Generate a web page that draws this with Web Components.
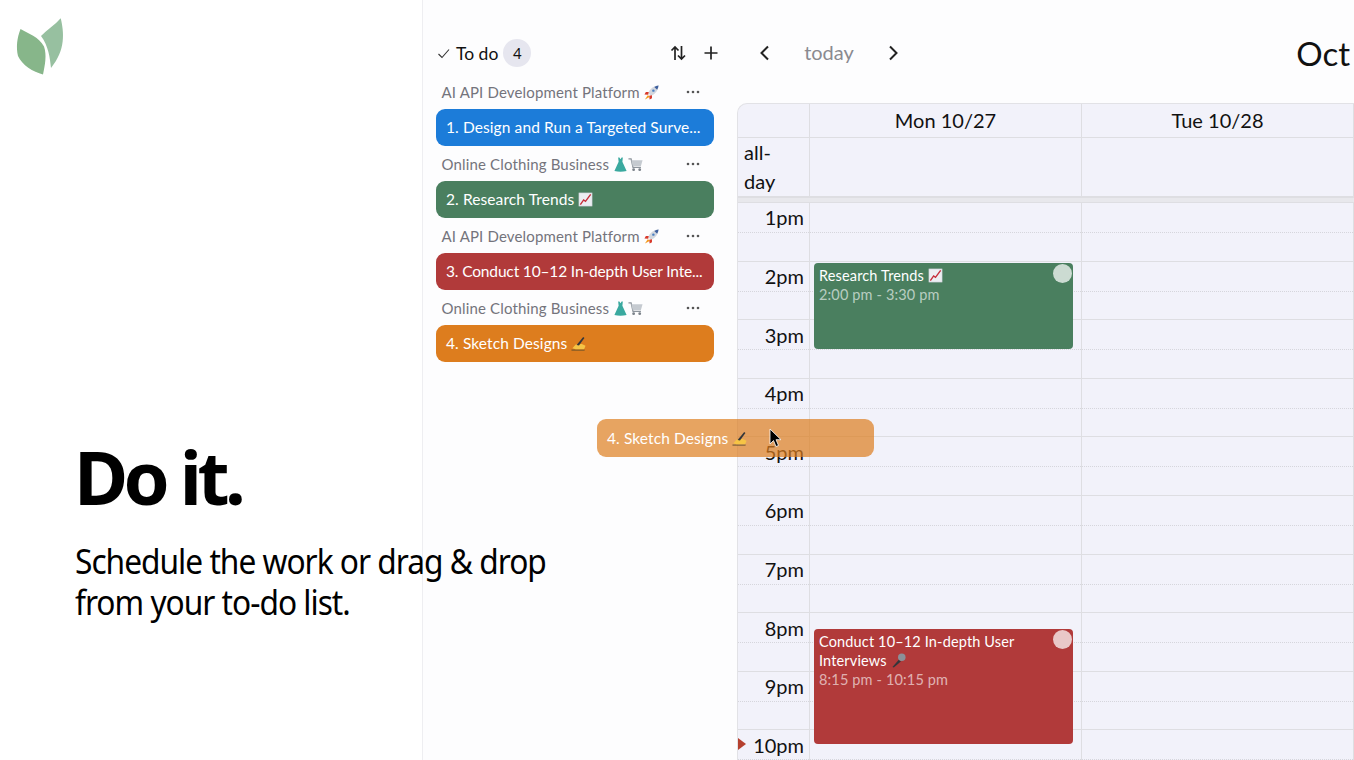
<!DOCTYPE html>
<html>
<head>
<meta charset="utf-8">
<title>Do it.</title>
<style>
    html, body { margin: 0; height: 100%; overflow: hidden; background: #fff; }
</style>
</head>
<body>
<app-page>
    <hero-pane slot="hero" heading="Do it.">Schedule the work or drag &amp; drop<br>from your to-do list.</hero-pane>
    <todo-panel slot="todo" count="4">
        <todo-group project="AI API Development Platform" emoji="rocket">
            <todo-item color="#1c7cd9">1. Design and Run a Targeted Surve...</todo-item>
        </todo-group>
        <todo-group project="Online Clothing Business" emoji="dress,cart">
            <todo-item color="#4a7f5f">2. Research Trends <mini-emoji name="chart"></mini-emoji></todo-item>
        </todo-group>
        <todo-group project="AI API Development Platform" emoji="rocket">
            <todo-item color="#b13a3a" style="letter-spacing:-.15px">3. Conduct 10–12 In-depth User Inte...</todo-item>
        </todo-group>
        <todo-group project="Online Clothing Business" emoji="dress,cart">
            <todo-item color="#dd7d1e">4. Sketch Designs <mini-emoji name="hand"></mini-emoji></todo-item>
        </todo-group>
    </todo-panel>
    <cal-view slot="calendar"></cal-view>
    <drag-ghost slot="ghost">4. Sketch Designs <mini-emoji name="hand"></mini-emoji></drag-ghost>
</app-page>

<script>
const UI_FONT = '"Lato", "Noto Sans", sans-serif';

const EMOJI = {
    rocket: `<path d="M15.500 .5C10 1 6.500 4 4.500 8.500l3 3C12 9.500 15 6 15.500 .5z" fill="#d3d7de"/><path d="M15.500 .5c-1.700.2-3.200.7-4.500 1.500l3 3c.8-1.300 1.300-2.800 1.500-4.500z" fill="#3d5f9e"/><circle cx="10" cy="6" r="1.300" fill="#4a7fc1"/><path d="M5 7.500H2L.5 10l4 .5zM8.500 11v3l-2.500 1.500-.5-4z" fill="#d8392b"/><path d="M4 11 1 15.500l4.500-2.500.5-1z" fill="#f39a1f"/>`,
    dress: `<path d="M5.500 .5h1.300L8 2.500 9.200 .5h1.300L10 5l4.500 10c-4 1-9 1-13 0L6 5z" fill="#3aa99f"/>`,
    cart: `<path d="M.5 2h2.800l2 9h8.500" fill="none" stroke="#8d949c" stroke-width="1.300"/><path d="M3.600 3.500h11.900l-1.700 6H5z" fill="#c5cad0"/><circle cx="6" cy="13.500" r="1.500" fill="#7b828a"/><circle cx="12.500" cy="13.500" r="1.500" fill="#7b828a"/>`,
    chart: `<rect x="1" y="1" width="14" height="14" fill="#eceef2" stroke="#c9ccd3" stroke-width=".6"/><path d="M2.500 13.500l3.500-5 2 1.500 5.500-7.500" fill="none" stroke="#c62f3b" stroke-width="1.500"/>`,
    hand: `<path d="M.5 15h14" stroke="#5a4a2a" stroke-width="1"/><path d="M1.500 13 5 9l6.500-.5 4 2-1.500 3.500H5z" fill="#f6c445"/><path d="M6 9.500 13 1l1.300 1L8.500 10z" fill="#33363b"/>`,
    mic: `<path d="M1.500 15 8.500 7 10.500 9 3 15.500z" fill="#33363b"/><circle cx="11.500" cy="4.500" r="4" fill="#8b9098"/>`
};

class MiniEmoji extends HTMLElement {
    constructor() {
        super();
        this.shadowObj = this.attachShadow({ mode: 'open' });
        this.shadowObj.innerHTML = `
        <style>
            :host { display: inline-block; width: 15px; height: 15px; vertical-align: -2px; }
            svg { display: block; width: 100%; height: 100%; }
        </style>
        <svg viewBox="0 0 16 16">${EMOJI[this.getAttribute('name')] || ''}</svg>`;
    }
}
customElements.define('mini-emoji', MiniEmoji);

class AppPage extends HTMLElement {
    constructor() {
        super();
        this.shadowObj = this.attachShadow({ mode: 'open' });
        this.shadowObj.innerHTML = `
        <style>
            :host { display: flex; position: relative; width: 1354px; height: 760px; overflow: hidden; background: #fff; }
            .panel {
                flex: 1; display: flex; min-width: 0;
                background: #fdfdfe; border-left: 1px solid #eeeef1;
            }
            .left { flex: 0 0 422px; width: 422px; min-width: 0; position: relative; z-index: 2; }
            .ghost { position: absolute; left: 597px; top: 419px; z-index: 3; }
        </style>
        <div class="left"><slot name="hero"></slot></div>
        <div class="panel">
            <slot name="todo"></slot>
            <slot name="calendar"></slot>
        </div>
        <div class="ghost"><slot name="ghost"></slot></div>`;
    }
}
customElements.define('app-page', AppPage);

class HeroPane extends HTMLElement {
    constructor() {
        super();
        this.shadowObj = this.attachShadow({ mode: 'open' });
        this.shadowObj.innerHTML = `
        <style>
            :host {
                display: flex; flex-direction: column; justify-content: space-between;
                width: 422px; height: 760px; box-sizing: border-box; padding: 18px 0 138px 0;
                font-family: "Noto Sans", sans-serif; color: #000; white-space: nowrap;
            }
            svg { display: block; width: 70px; height: 60px; }
            h1 { margin: 0 0 26px 74px; font-size: 74px; line-height: 74px; font-weight: 700; letter-spacing: -4.600px; }
            p { margin: 0 0 0 75px; font-size: 35px; line-height: 41px; letter-spacing: -1.100px; transform: scaleX(.905); transform-origin: left center; }
        </style>
        <svg viewBox="0 18 70 60">
            <path d="M20.500 29C29 34 39 37 44 46.500 47 55 45 65 43 74.500 33 72 22 65 18 56 16 47 17 38 20.500 29z" fill="#87b68a"/>
            <path d="M60.700 18.300C64 32 66 50 51 68 50 58 48.500 46 41 36 47 30 55 25 60.700 18.300z" fill="#97c0a0"/>
        </svg>
        <div>
            <h1>${this.getAttribute('heading')}</h1>
            <p><slot></slot></p>
        </div>`;
    }
}
customElements.define('hero-pane', HeroPane);

class TodoPanel extends HTMLElement {
    constructor() {
        super();
        this.shadowObj = this.attachShadow({ mode: 'open' });
        this.shadowObj.innerHTML = `
        <style>
            :host { display: block; width: 314px; flex: none; box-sizing: border-box; padding: 39px 23px 0 13px; font-family: ${UI_FONT}; }
            header { display: flex; align-items: center; height: 28px; margin-bottom: 12px; color: #111; font-size: 17.500px; }
            .check { width: 13px; height: 13px; margin: 0 6px 0 1px; }
            .count {
                width: 28px; height: 28px; margin-left: 5px; border-radius: 50%; background: #e6e6ef;
                display: flex; align-items: center; justify-content: center; font-size: 15px;
            }
            .tools { margin-left: auto; display: flex; gap: 15px; margin-right: -6px; }
            .tools svg { display: block; width: 18px; height: 18px; }
            ::slotted(todo-group) { margin-bottom: 5px; }
        </style>
        <header>
            <svg class="check" viewBox="0 0 13 13"><path d="M1.500 7l3.500 3.500 7-8" fill="none" stroke="#333" stroke-width="1.100"/></svg>
            <span>To do</span>
            <span class="count">${this.getAttribute('count')}</span>
            <div class="tools">
                <svg viewBox="0 0 18 18" fill="none" stroke="#222" stroke-width="1.700"><path d="M6 16V3M2.500 6.500 6 3l3.500 3.500M12.500 2v13M9 11.500l3.500 3.500 3.500-3.500"/></svg>
                <svg viewBox="0 0 18 18" fill="none" stroke="#222" stroke-width="1.700"><path d="M9 2.500v13M2.500 9h13"/></svg>
            </div>
        </header>
        <slot></slot>`;
    }
}
customElements.define('todo-panel', TodoPanel);

class TodoGroup extends HTMLElement {
    constructor() {
        super();
        this.shadowObj = this.attachShadow({ mode: 'open' });
        const icons = this.getAttribute('emoji').split(',').map(n => `<mini-emoji name="${n}"></mini-emoji>`).join('');
        this.shadowObj.innerHTML = `
        <style>
            :host { display: block; }
            .row { display: flex; align-items: center; height: 26px; padding: 0 14px 0 5.500px; color: #74747c; font-size: 15px; letter-spacing: .15px; margin-bottom: 4px; white-space: nowrap; }
            .emoji { margin-left: 4px; display: inline-flex; }
            svg { margin-left: auto; width: 14px; height: 4px; display: block; }
        </style>
        <div class="row">
            <span>${this.getAttribute('project')}</span><span class="emoji">${icons}</span>
            <svg viewBox="0 0 14 4" fill="#555"><circle cx="2" cy="2" r="1.300"/><circle cx="7" cy="2" r="1.300"/><circle cx="12" cy="2" r="1.300"/></svg>
        </div>
        <slot></slot>`;
    }
}
customElements.define('todo-group', TodoGroup);

class TodoItem extends HTMLElement {
    constructor() {
        super();
        this.shadowObj = this.attachShadow({ mode: 'open' });
        this.shadowObj.innerHTML = `
        <style>
            :host {
                display: block; height: 37px; line-height: 37px; box-sizing: border-box;
                padding: 0 10px 0 10px; border-radius: 9px; color: #fff; font-size: 15.500px; letter-spacing: .1px;
                background: ${this.getAttribute('color')};
                white-space: nowrap;
            }
        </style>
        <slot></slot>`;
    }
}
customElements.define('todo-item', TodoItem);

class DragGhost extends HTMLElement {
    constructor() {
        super();
        this.shadowObj = this.attachShadow({ mode: 'open' });
        this.shadowObj.innerHTML = `
        <style>
            :host {
                display: block; position: relative; width: 277px; height: 38px; line-height: 38px; box-sizing: border-box;
                padding: 0 10px; border-radius: 9px; color: #fff; font-size: 15.500px; letter-spacing: .1px; font-family: ${UI_FONT};
                background: rgba(221, 125, 30, .7); white-space: nowrap;
            }
            svg { position: absolute; left: 172px; top: 9px; width: 14px; height: 20px; }
        </style>
        <slot></slot>
        <svg viewBox="0 0 14 20"><path d="M1 1v15l3.500-3.500 2.500 6 2.500-1-2.500-5.800H12z" fill="#000" stroke="#fff" stroke-width=".8"/></svg>`;
    }
}
customElements.define('drag-ghost', DragGhost);

class CalEvent extends HTMLElement {
    constructor() {
        super();
        this.shadowObj = this.attachShadow({ mode: 'open' });
        this.shadowObj.innerHTML = `
        <style>
            :host {
                position: absolute; left: 3.500px; width: 259.500px; box-sizing: border-box; display: block;
                top: ${this.getAttribute('top')}px; height: ${this.getAttribute('height')}px;
                padding: 3px 32px 0 5.500px; border-radius: 4px; font-size: 14.500px; letter-spacing: .15px; line-height: 19px; color: #fff;
                background: ${this.getAttribute('color')};
            }
            .time { color: rgba(255,255,255,.62); }
            i { position: absolute; top: 1.500px; right: 1px; width: 19px; height: 19px; border-radius: 50%; background: rgba(255,255,255,.72); }
        </style>
        <div><slot></slot></div>
        <div class="time">${this.getAttribute('time')}</div>
        <i></i>`;
    }
}
customElements.define('cal-event', CalEvent);

class CalView extends HTMLElement {
    constructor() {
        super();
        this.shadowObj = this.attachShadow({ mode: 'open' });
        const hours = ['1pm', '2pm', '3pm', '4pm', '5pm', '6pm', '7pm', '8pm', '9pm', '10pm'];
        const labels = hours.map(h => `<div class="label">${h}</div>`).join('');
        this.shadowObj.innerHTML = `
        <style>
            :host { display: block; flex: 1; min-width: 0; font-family: ${UI_FONT}; color: #111; }
            .toolbar { height: 103px; box-sizing: border-box; padding: 39px 4px 0 20px; display: flex; align-items: flex-start; }
            .toolbar svg { width: 14px; height: 28px; display: block; }
            .today { width: 116px; text-align: center; line-height: 26px; font-size: 20px; color: #8a8a90; }
            .title { margin-left: auto; font-size: 33px; line-height: 28px; }
            .grid {
                height: 657px; overflow: hidden; box-sizing: border-box; background: #f2f2fa;
                border: 1px solid #e2e2e6; border-right: 0; border-bottom: 0; border-top-left-radius: 10px;
                display: grid; grid-template-columns: 72px 272px 272px;
                grid-template-rows: 34px 59px 6px 1fr;
            }
            .cell { border-right: 1px solid #dedee2; border-bottom: 1px solid #dedee2; box-sizing: border-box; }
            .dayname { text-align: center; line-height: 33px; font-size: 20px; }
            .allday { font-size: 20px; line-height: 29px; padding: 0 0 0 6px; }
            .gap { grid-column: 1 / -1; background: #e8e8ec; border-bottom: 1px solid #dedee2; border-top: 1px solid #dedee2; }
            .col { position: relative; border-right: 1px solid #dedee2; box-sizing: border-box; height: 600px; }
            .slots { position: absolute; inset: 0; }
            .slots b { display: block; height: 58.600px; box-sizing: border-box; border-bottom: 1px solid #dedee2; position: relative; }
            .slots b::after { content: ""; position: absolute; left: 0; right: 0; top: 29px; border-top: 1px dotted #d6d6dc; }
            .label { height: 58.600px; box-sizing: border-box; padding: 1.400px 5px 0 0; text-align: right; font-size: 20px; line-height: 26px; position: relative; z-index: 1; }
            .now { position: absolute; left: 0; top: 535px; width: 0; height: 0; border-left: 8px solid #b5402f; border-top: 6px solid transparent; border-bottom: 6px solid transparent; z-index: 2; }
        </style>
        <div class="toolbar">
            <svg viewBox="0 0 14 28" fill="none" stroke="#222" stroke-width="2"><path d="M11 7.500 4.500 14l6.500 6.500"/></svg>
            <span class="today">today</span>
            <svg viewBox="0 0 14 28" fill="none" stroke="#222" stroke-width="2"><path d="M3 7.500 9.500 14 3 20.500"/></svg>
            <span class="title">Oct</span>
        </div>
        <div class="grid">
            <div class="cell"></div>
            <div class="cell dayname">Mon 10/27</div>
            <div class="cell dayname">Tue 10/28</div>
            <div class="cell allday">all-<br>day</div>
            <div class="cell"></div>
            <div class="cell"></div>
            <div class="gap"></div>
            <div class="col times"><div class="slots">${hours.map(() => '<b></b>').join('')}</div>${labels}<div class="now"></div></div>
            <div class="col">
                <div class="slots">${hours.map(() => '<b></b>').join('')}</div>
                <cal-event color="#4a7f5f" top="59.5" height="86" time="2:00 pm - 3:30 pm">Research Trends <mini-emoji name="chart"></mini-emoji></cal-event>
                <cal-event color="#b13a3a" top="425.5" height="115" time="8:15 pm - 10:15 pm">Conduct 10–12 In-depth User Interviews <mini-emoji name="mic"></mini-emoji></cal-event>
            </div>
            <div class="col"><div class="slots">${hours.map(() => '<b></b>').join('')}</div></div>
        </div>`;
    }
}
customElements.define('cal-view', CalView);
</script>
</body>
</html>
